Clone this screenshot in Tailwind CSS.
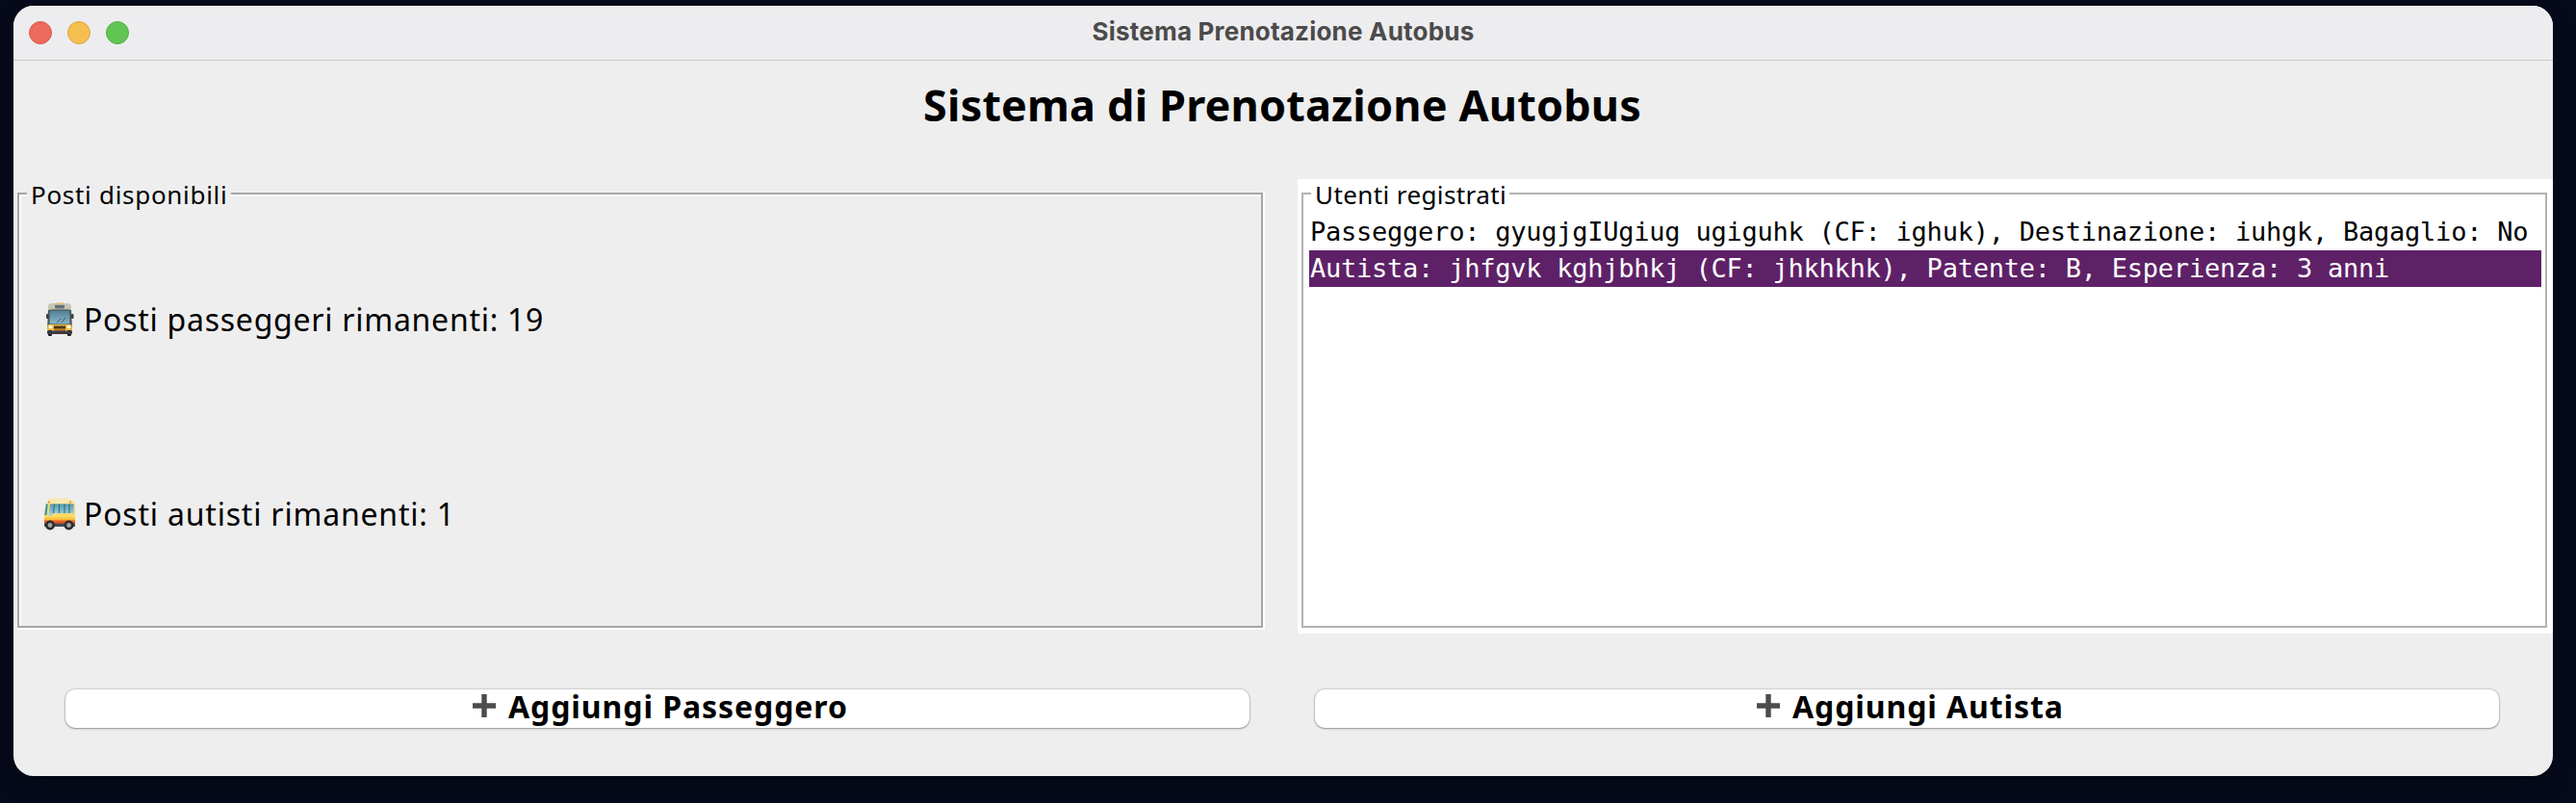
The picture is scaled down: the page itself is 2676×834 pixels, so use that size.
<!DOCTYPE html>
<html lang="it">
<head>
<meta charset="utf-8">
<title>Sistema Prenotazione Autobus</title>
<script src="https://cdn.jsdelivr.net/npm/@tailwindcss/browser@4"></script>
</head>
<body class="h-[834px] w-[2676px] overflow-hidden bg-[#060a1b] pl-[14px] pt-[6px] font-['Noto_Sans',sans-serif] text-black">
<main class="flex h-[800px] w-[2638px] flex-col overflow-hidden rounded-[21px] bg-[#eeeeee] shadow-[0_8px_24px_rgba(0,0,0,0.25)]">
  <header class="relative h-[57px] shrink-0 border-b border-[#c8c9cb] bg-[#ededef] shadow-[inset_0_1px_0_#ffffff]">
    <div class="flex gap-4 pl-4 pt-4">
      <span class="size-6 rounded-full border border-[#d9574d] bg-[#ed6a5e]"></span>
      <span class="size-6 rounded-full border border-[#dba343] bg-[#f5bf4f]"></span>
      <span class="size-6 rounded-full border border-[#4fae41] bg-[#61c554]"></span>
    </div>
    <div class="absolute inset-x-0 top-0 text-center font-[Inter,sans-serif] text-[26px] font-bold leading-[53px] tracking-[0.2px] text-[#4b4b4b]">Sistema Prenotazione Autobus</div>
  </header>
  <h1 class="h-[123px] shrink-0 pr-[2px] text-center text-[45px] font-bold leading-[92px] tracking-[0.15px]">Sistema di Prenotazione Autobus</h1>

  <div class="grid h-[472px] shrink-0 grid-cols-2 gap-[30px]">
    <section class="relative px-1 pb-1 pt-[14px]">
      <div class="h-[454px] border-2 border-white">
        <div class="-ml-[2px] -mt-[2px] h-[452px] w-[1294px] border-2 border-[#a6a6a6]">
          <div class="h-full border-l-2 border-t-2 border-white pl-[21px] pt-[27px]">
            <div class="flex h-[202px] items-center gap-[6px]">
              <svg class="h-[36px] w-[38px]" viewBox="0 0 38 36">
                <defs>
                  <linearGradient id="glass" x1="0" y1="0" x2="0" y2="1"><stop offset="0" stop-color="#4d7f91"/><stop offset="1" stop-color="#8bb8cc"/></linearGradient>
                  <linearGradient id="side" x1="0" y1="0" x2="0" y2="1"><stop offset="0" stop-color="#4c9db4"/><stop offset="1" stop-color="#a9dbe2"/></linearGradient>
                  <linearGradient id="paint" x1="0" y1="0" x2="0" y2="1"><stop offset="0" stop-color="#ffe46c"/><stop offset="1" stop-color="#f5ad27"/></linearGradient>
                </defs>
                <rect x="7" y="27" width="4" height="8" rx="1" fill="#202225"/><rect x="27" y="27" width="4" height="8" rx="1" fill="#202225"/>
                <path d="M7 7h24l1 21H6z" fill="#5d5b55"/>
                <path d="M7 4q0-3 4-3h16q4 0 4 3v4H7z" fill="#c9c5b5"/>
                <path d="M15 1h8" stroke="#e7c377" stroke-width="1.4"/>
                <rect x="14" y="2.800" width="10" height="3.600" rx=".8" fill="#64727a"/>
                <rect x="8" y="8" width="22" height="15" rx="1.500" fill="url(#glass)" stroke="#3f4a4f"/>
                <path d="m16 21 4-4m1 4 4-5" stroke="#365666" stroke-width="1"/>
                <rect x="5" y="12" width="2.500" height="5" rx="1" fill="#3b3e41"/><rect x="31" y="12" width="2.500" height="5" rx="1" fill="#3b3e41"/>
                <path d="M7 23h24l1 3v3H6v-3z" fill="#edb43d"/>
                <rect x="13" y="24.500" width="12" height="3" fill="#4b3a18"/>
                <circle cx="9.500" cy="25.500" r="2" fill="#fff6d8"/><circle cx="28.500" cy="25.500" r="2" fill="#fff6d8"/>
                <path d="M13 28h12v2H13z" fill="#c87726"/>
                <path d="M6 29.500h26V32q0 1-1 1H7q-1 0-1-1z" fill="#393b3e"/>
              </svg>
              <span class="text-[32px] leading-[38px] tracking-[0.74px] whitespace-nowrap">Posti passeggeri rimanenti: 19</span>
            </div>
            <div class="flex h-[202px] items-center gap-[6px]">
              <svg class="h-[36px] w-[38px]" viewBox="0 0 38 36">
                <path d="M6 5Q7 2 11 1.500h16q3 .5 6.500 2.500l1.500 3v11H4z" fill="#f8e8b0"/>
                <path d="M4.500 7 3 19v10h32V7z" fill="#f7d775"/>
                <path d="M3 19h32v6H3z" fill="url(#paint)"/>
                <path d="M3 24.500h32V28H3z" fill="#e8592c"/>
                <path d="M3 27.500h32V31H3z" fill="#46494d"/>
                <path d="M4.800 7.500h2L5.500 19H3.300z" fill="#3c91a8"/>
                <path d="M9 7.500h24.500v9.500H12l-1 3H7.500z" fill="url(#side)"/>
                <path d="M13.500 7.500 12.500 17m6-9.500V17m5.500-9.500V17m5-9.500V17" stroke="#39606b" stroke-width="1"/>
                <circle cx="8" cy="5.500" r="1.200" fill="#e9a02c"/><circle cx="30" cy="5.500" r="1.200" fill="#e9a02c"/>
                <circle cx="9" cy="29.500" r="5" fill="#2b2d30"/><circle cx="9" cy="29.500" r="2.400" fill="#a3a5a8"/>
                <circle cx="28.500" cy="29.500" r="5" fill="#2b2d30"/><circle cx="28.500" cy="29.500" r="2.400" fill="#a3a5a8"/>
              </svg>
              <span class="text-[32px] leading-[38px] tracking-[0.8px] whitespace-nowrap">Posti autisti rimanenti: 1</span>
            </div>
          </div>
        </div>
      </div>
      <h2 class="absolute left-[14px] top-0 h-8 w-[212px] whitespace-nowrap bg-[#eeeeee] pl-[4px] text-[26px] leading-8 tracking-[0.7px]">Posti disponibili</h2>
    </section>

    <section class="relative bg-white px-1 pt-[14px]">
      <div class="h-[452px] w-[1296px] pr-[2px]">
        <div class="h-full border-2 border-[#b2b2b2] pl-[6px] pt-5">
          <ul class="w-[1280px] whitespace-nowrap font-['DejaVu_Sans_Mono',monospace] text-[27px] leading-[38px] tracking-[-0.24px]">
            <li class="h-[38px] pl-[1px]">Passeggero: gyugjgIUgiug ugiguhk (CF: ighuk), Destinazione: iuhgk, Bagaglio: No</li>
            <li class="h-[38px] bg-[#5e2167] pl-[1px] text-white">Autista: jhfgvk kghjbhkj (CF: jhkhkhk), Patente: B, Esperienza: 3 anni</li>
          </ul>
        </div>
      </div>
      <h2 class="absolute left-[14px] top-0 h-8 w-[206px] whitespace-nowrap bg-white pl-[4px] text-[26px] leading-8 tracking-[0.4px]">Utenti registrati</h2>
    </section>
  </div>

  <div class="flex gap-[68px] pl-[54px] pt-[58px]">
    <button class="flex h-10 w-[1230px] rounded-[10px] bg-white pl-[423px] text-[32px] font-bold leading-[35px] tracking-[0.92px] whitespace-nowrap shadow-[0_0_1px_1px_rgba(0,0,0,0.12),0_1px_2px_rgba(0,0,0,0.3)]">
      <svg class="mt-[5px] mr-[13px] h-6 w-6 shrink-0" viewBox="0 0 24 24"><path d="M9.300 0h5.400v9.300H24v5.400h-9.300V24H9.300v-9.300H0V9.300h9.300z" fill="#4c4c4c"/></svg>Aggiungi Passeggero</button>
    <button class="flex h-10 w-[1230px] rounded-[10px] bg-white pl-[459px] text-[32px] font-bold leading-[35px] tracking-[0.9px] whitespace-nowrap shadow-[0_0_1px_1px_rgba(0,0,0,0.12),0_1px_2px_rgba(0,0,0,0.3)]">
      <svg class="mt-[5px] mr-[13px] h-6 w-6 shrink-0" viewBox="0 0 24 24"><path d="M9.300 0h5.400v9.300H24v5.400h-9.300V24H9.300v-9.300H0V9.300h9.300z" fill="#4c4c4c"/></svg>Aggiungi Autista</button>
  </div>
</main>
</body>
</html>
